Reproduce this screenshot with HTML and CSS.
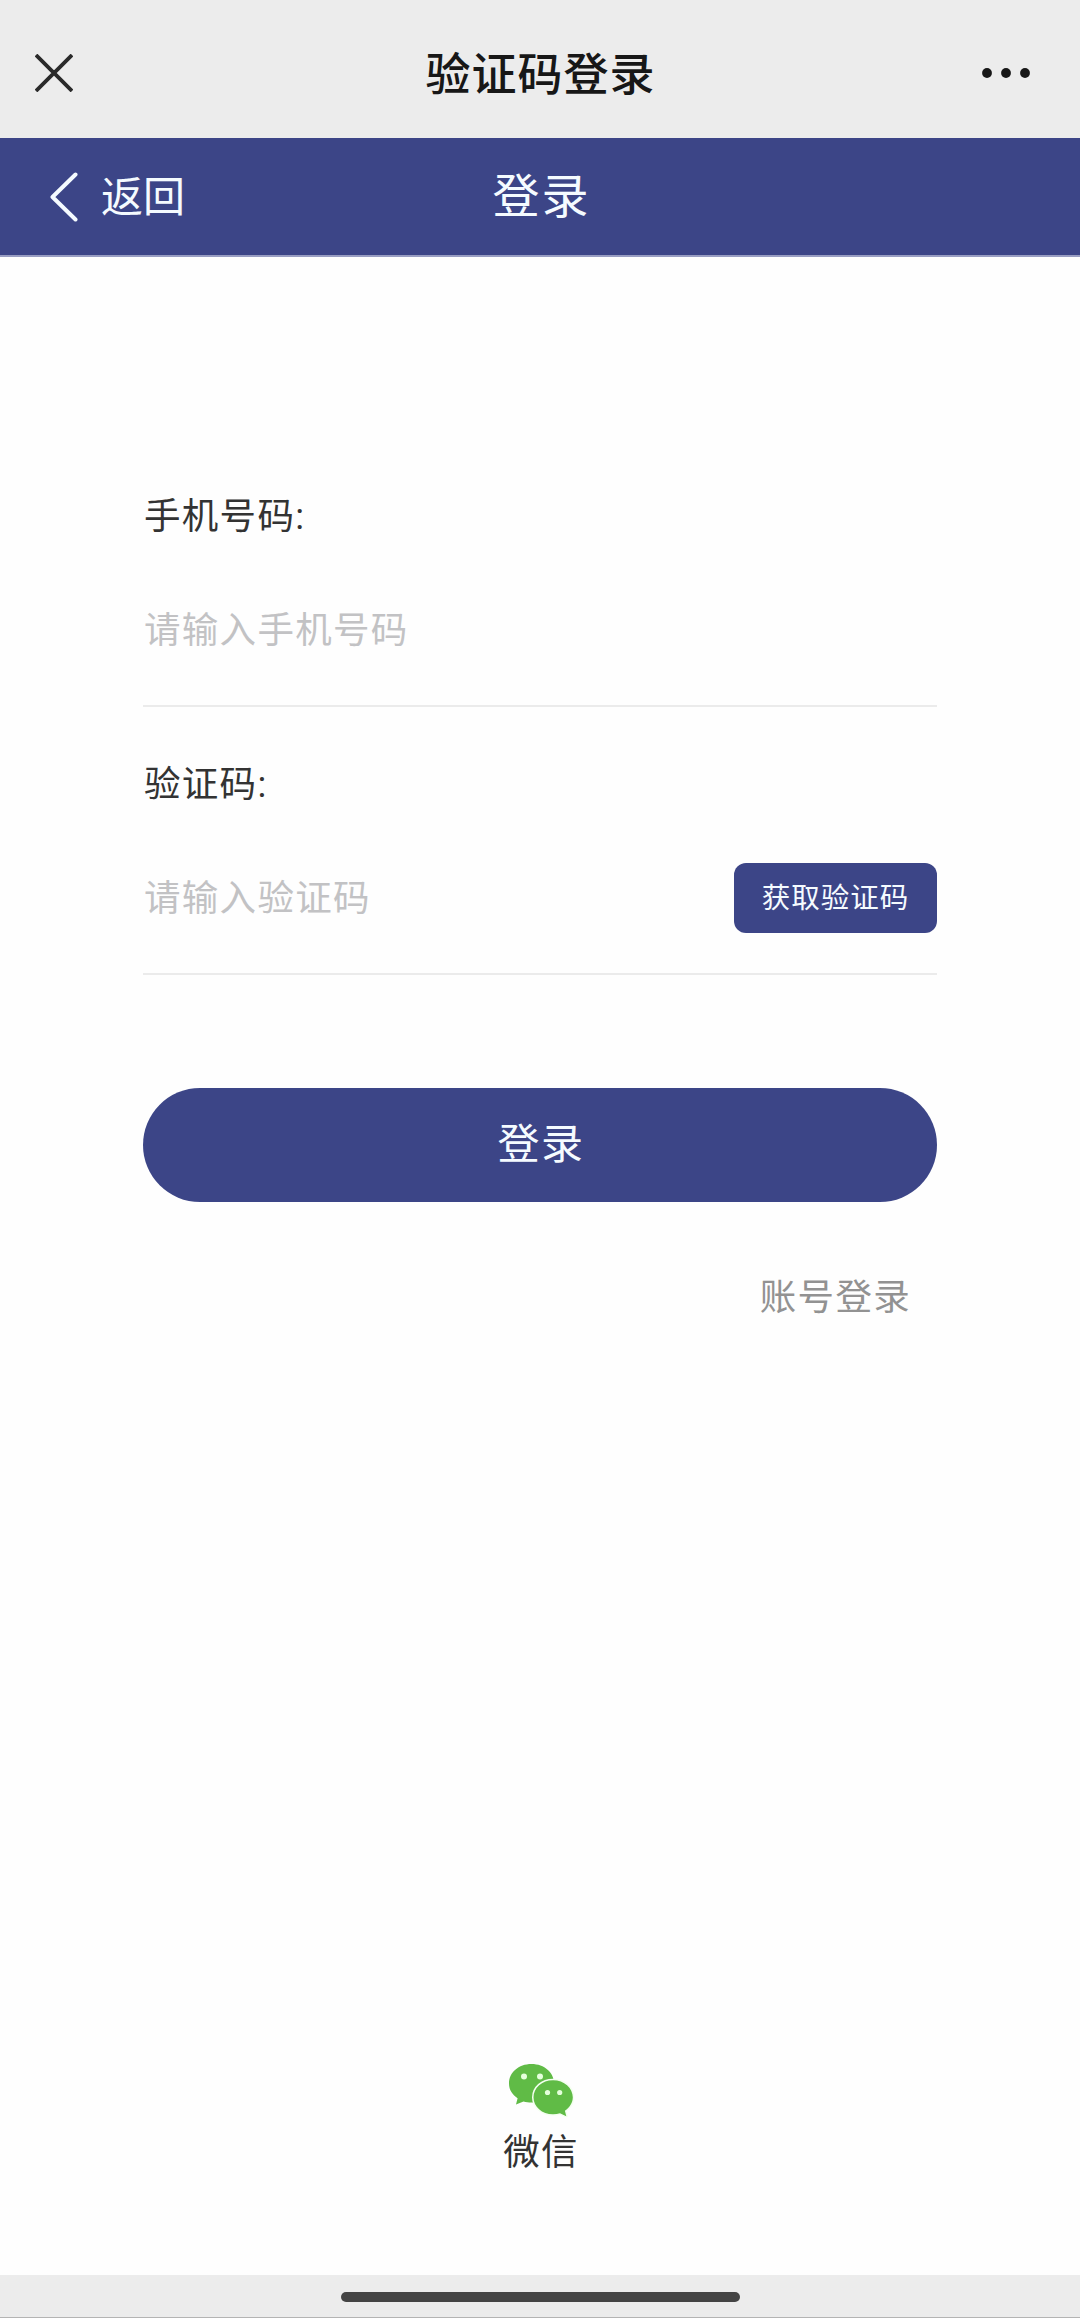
FILE: index.html
```html
<!DOCTYPE html>
<html lang="zh-CN">
<head>
    <meta charset="UTF-8">
    <title>验证码登录</title>
    <link rel="stylesheet" href="styles.css">
</head>
<body>
    <header class="app-bar">
        <svg class="close-icon" viewBox="0 0 38 38">
            <path d="M1 1L37 37M37 1L1 37"/>
        </svg>
        <h1 class="app-title">验证码登录</h1>
        <svg class="more-icon" viewBox="0 0 48 10">
            <circle cx="5" cy="5" r="4.9"/>
            <circle cx="24" cy="5" r="4.9"/>
            <circle cx="43" cy="5" r="4.9"/>
        </svg>
    </header>

    <nav class="nav-bar">
        <a class="nav-back">
            <svg class="back-icon" viewBox="0 0 28 50">
                <path d="M25.5 2.5L2.5 25L25.5 47.5"/>
            </svg>
            <span class="back-text">返回</span>
        </a>
        <h2 class="nav-title">登录</h2>
    </nav>

    <main class="login">
        <form class="login-form">
            <div class="field">
                <label class="field-label" for="phone">手机号码:</label>
                <div class="field-row">
                    <input class="field-input" id="phone" type="tel" placeholder="请输入手机号码">
                </div>
            </div>
            <div class="field">
                <label class="field-label" for="code">验证码:</label>
                <div class="field-row">
                    <input class="field-input" id="code" type="text" placeholder="请输入验证码">
                    <button class="code-btn" type="button">获取验证码</button>
                </div>
            </div>
            <button class="login-btn" type="button">登录</button>
            <a class="account-link">账号登录</a>
        </form>

        <div class="wechat">
            <svg class="wechat-icon" viewBox="0 0 66 54">
                <path class="bubble" d="M23.5 1C10.5 1 1 9.5 1 20.5C1 26.700 4.200 31.600 9.600 35.200L8 41.500L15.500 38.400C18 39.100 20.700 39.600 23.500 39.600C36.500 39.600 46 31.500 46 20.500C46 9.500 36.500 1 23.500 1Z"/>
                <path class="bubble bubble-front" d="M45 17.200C34 17.200 25.500 24.800 25.500 34.300C25.500 43.900 34 51.300 45 51.300C47.600 51.300 49.900 50.900 52 50.200L58.300 53.300L56.900 47.700C61.700 44.500 64.800 39.800 64.800 34.300C64.800 24.800 56.100 17.200 45 17.200Z"/>
                <g class="eyes">
                    <circle cx="16" cy="13.500" r="3"/>
                    <circle cx="32" cy="13.500" r="3"/>
                    <circle cx="39.500" cy="29.500" r="2.600"/>
                    <circle cx="51.700" cy="29.500" r="2.600"/>
                </g>
            </svg>
            <span class="wechat-text">微信</span>
        </div>
    </main>

    <footer class="home-bar">
        <div class="home-indicator"></div>
    </footer>
</body>
</html>
```

FILE: styles.css
```css
:root {
    --main-blue: #3c4587;
    --bar-gray: #ececec;
    --text-dark: #333333;
}

* {
    margin: 0;
    padding: 0;
    box-sizing: border-box;
}

body {
    font-family: Roboto, 'Noto Sans CJK SC', sans-serif;
    background: #fefefe;
    color: var(--text-dark);
    height: 2318px;
    display: flex;
    flex-direction: column;
    overflow: hidden;
}

/* 顶部栏 */
.app-bar {
    height: 138px;
    padding: 8px 50px 0 35px;
    background: var(--bar-gray);
    display: grid;
    grid-template-columns: 1fr auto 1fr;
    align-items: center;
    flex-shrink: 0;
}

.close-icon {
    width: 38px;
    height: 38px;
    fill: none;
    stroke: #2a2a2a;
    stroke-width: 3.8;
}

.app-title {
    font-size: 45px;
    font-weight: 500;
    letter-spacing: 1px;
    line-height: 60px;
    color: #171717;
    padding: 5px 0 0 16px;
}

.more-icon {
    width: 48px;
    height: 10px;
    fill: #171717;
    justify-self: end;
}

/* 导航栏 */
.nav-bar {
    height: 119px;
    padding: 0 50px;
    background: var(--main-blue);
    border-bottom: 2px solid #989dc2;
    color: #f5fbff;
    display: grid;
    grid-template-columns: 1fr auto 1fr;
    align-items: center;
    flex-shrink: 0;
}

.nav-back {
    display: flex;
    align-items: center;
    gap: 23px;
    font-size: 42px;
    line-height: 60px;
}

.back-icon {
    width: 28px;
    height: 50px;
    fill: none;
    stroke: #f5fbff;
    stroke-width: 4;
    stroke-linecap: round;
    stroke-linejoin: round;
}

.back-text {
    padding-top: 2px;
}

.nav-title {
    font-size: 47px;
    font-weight: 400;
    letter-spacing: 2px;
    line-height: 60px;
    padding: 1px 0 0 3px;
}

/* 登录表单 */
.login {
    flex: 1;
    padding: 235px 143px 0;
    display: flex;
    flex-direction: column;
}

.login-form {
    display: flex;
    flex-direction: column;
}

.field {
    height: 268px;
    display: flex;
    flex-direction: column;
}

.field-label {
    padding-left: 1px;
    font-size: 36.5px;
    letter-spacing: 1.3px;
    line-height: 50px;
}

.field-row {
    height: 165px;
    padding-top: 13px;
    display: flex;
    align-items: center;
    border-bottom: 2px solid #ebebeb;
}

.field-input {
    flex: 1;
    min-width: 0;
    height: 60px;
    padding-left: 1px;
    border: none;
    outline: none;
    background: transparent;
    font-family: inherit;
    font-size: 36.5px;
    letter-spacing: 1.3px;
}

.field-input::placeholder {
    color: #c2c2c4;
}

.code-btn {
    width: 203px;
    height: 70px;
    padding-bottom: 6px;
    border: none;
    border-radius: 12px;
    background: var(--main-blue);
    color: #f5fbff;
    font-family: inherit;
    font-size: 28.5px;
    letter-spacing: 1px;
}

.login-btn {
    height: 114px;
    margin-top: 60px;
    padding: 0 0 9px 2px;
    border: none;
    border-radius: 57px;
    background: var(--main-blue);
    color: #f5fbff;
    font-family: inherit;
    font-size: 42px;
    letter-spacing: 1.5px;
}

.account-link {
    align-self: flex-end;
    margin: 71px 26px 0 0;
    font-size: 36.5px;
    letter-spacing: 1.3px;
    line-height: 50px;
    color: #929292;
}

/* 微信登录 */
.wechat {
    margin-top: auto;
    margin-bottom: 97px;
    padding-left: 2px;
    display: flex;
    flex-direction: column;
    align-items: center;
}

.wechat-icon {
    width: 66px;
    height: 54px;
    margin-bottom: 11px;
}

.bubble {
    fill: #60bb46;
}

.bubble-front {
    stroke: #f4fff0;
    stroke-width: 3;
    paint-order: stroke;
}

.eyes {
    fill: #e5ffdc;
}

.wechat-text {
    font-size: 36.5px;
    letter-spacing: 1.3px;
    line-height: 50px;
}

/* 底部横条 */
.home-bar {
    height: 43px;
    padding-top: 17px;
    background: var(--bar-gray);
    border-bottom: 1px solid #b4b4b4;
    flex-shrink: 0;
}

.home-indicator {
    width: 399px;
    height: 10px;
    margin: 0 auto;
    border-radius: 5px;
    background: #444444;
}
```
